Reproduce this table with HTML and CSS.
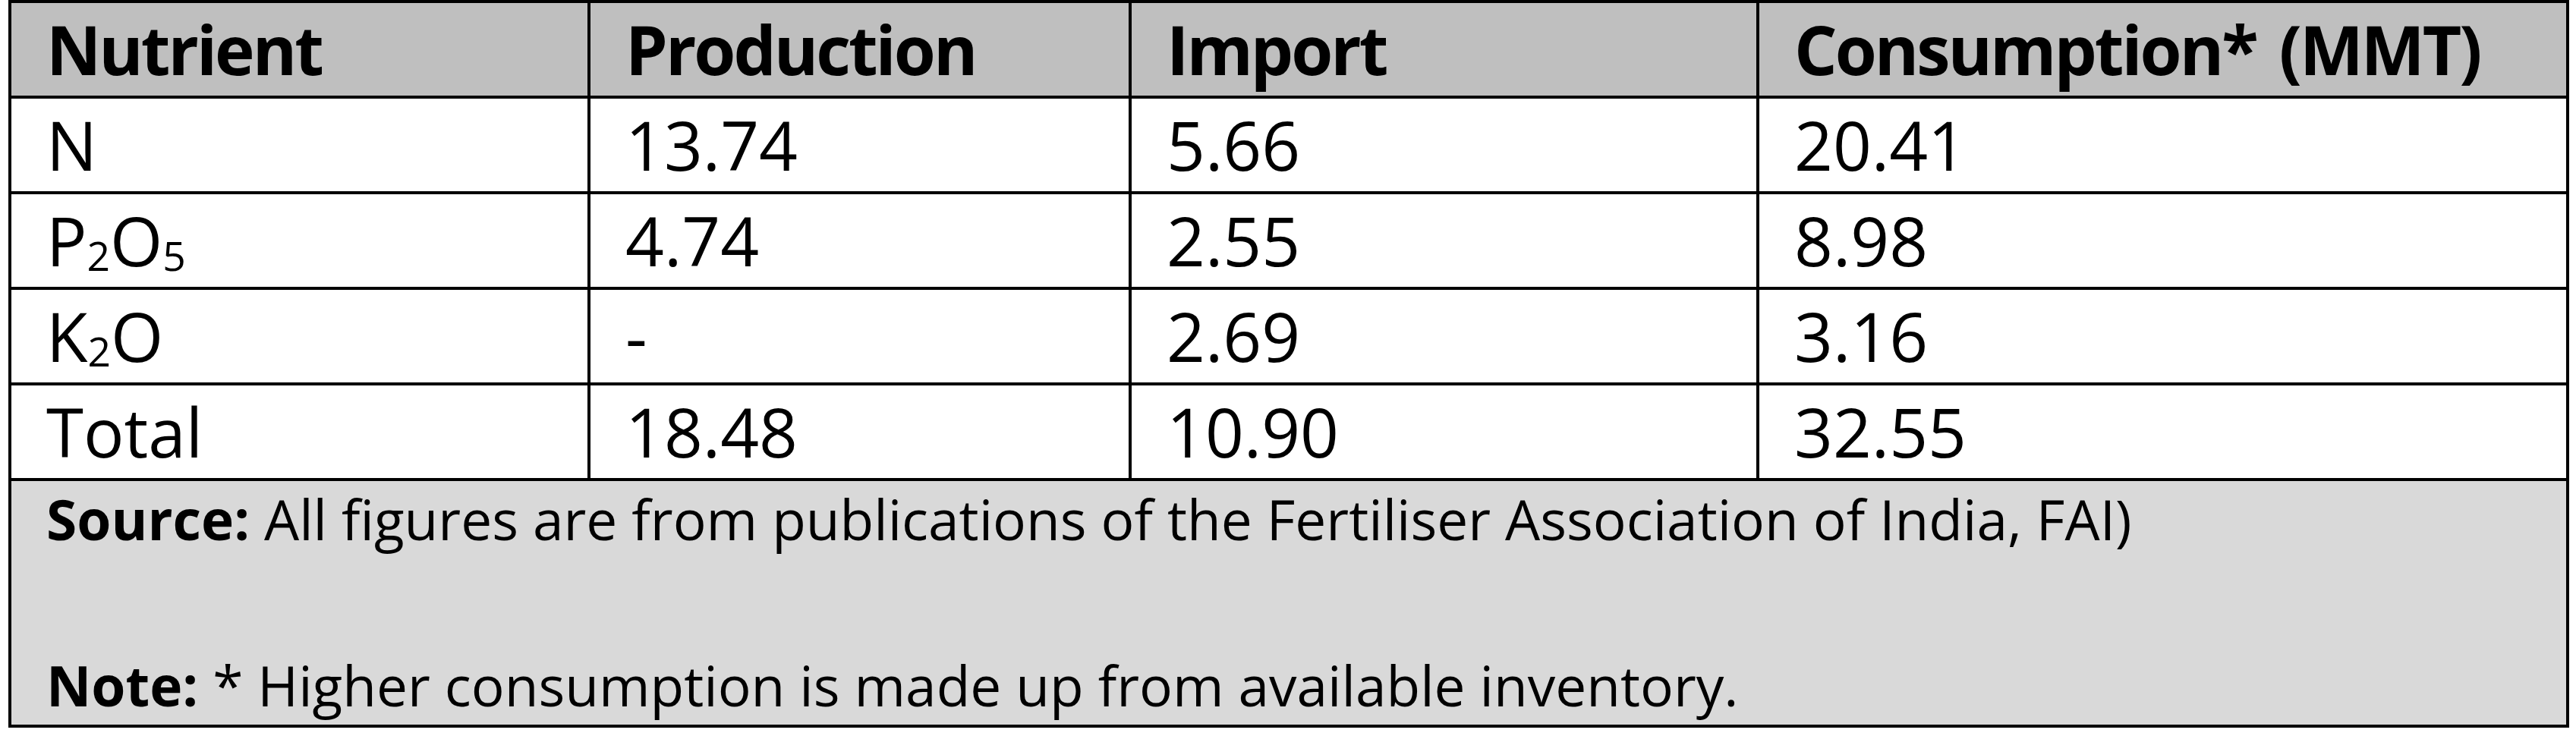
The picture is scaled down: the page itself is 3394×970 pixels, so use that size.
FILE: index.html
```html
<!DOCTYPE html>
<html lang="en">
<head>
<meta charset="utf-8">
<title>Fertiliser nutrients</title>
<link rel="stylesheet" href="styles.css">
</head>
<body>
<table class="data">
  <colgroup>
    <col class="c1"><col class="c2"><col class="c3"><col class="c4">
  </colgroup>
  <thead>
    <tr class="head">
      <th>Nutrient</th>
      <th>Production</th>
      <th>Import</th>
      <th>Consumption* (MMT)</th>
    </tr>
  </thead>
  <tbody>
    <tr><td>N</td><td>13.74</td><td>5.66</td><td>20.41</td></tr>
    <tr><td>P<sub>2</sub>O<sub>5</sub></td><td>4.74</td><td>2.55</td><td>8.98</td></tr>
    <tr><td>K<sub>2</sub>O</td><td>-</td><td>2.69</td><td>3.16</td></tr>
    <tr><td>Total</td><td>18.48</td><td>10.90</td><td>32.55</td></tr>
  </tbody>
  <tfoot>
    <tr>
      <td class="foot" colspan="4">
        <p class="line source"><b>Source:</b> All figures are from publications of the Fertiliser Association of India, FAI)</p>
        <p class="line note"><b>Note:</b> * Higher consumption is made up from available inventory.</p>
      </td>
    </tr>
  </tfoot>
</table>
</body>
</html>
```
FILE: styles.css
```css
html, body {
  margin: 0;
  padding: 0;
  background: #ffffff;
}

body {
  font-family: "Open Sans", Lato, sans-serif;
  font-variant-ligatures: none;
  color: #000000;
}

.data {
  margin-left: 11px;
  width: 3370px;
  table-layout: fixed;
  border-collapse: separate;
  border-spacing: 0;
  border-top: 4px solid #000;
  border-left: 4px solid #000;
}

.c1 { width: 763px; }
.c2 { width: 713px; }
.c3 { width: 827px; }
.c4 { width: 1067px; }

.data th,
.data td {
  box-sizing: border-box;
  border-right: 4px solid #000;
  border-bottom: 4px solid #000;
  padding: 0 0 0 46px;
  height: 126px;
  line-height: 122px;
  font-size: 89px;
  text-align: left;
  vertical-align: middle;
  white-space: nowrap;
}

.data th {
  font-weight: 700;
  letter-spacing: -3px;
  word-spacing: 10px;
  background: #bfbfbf;
}

.data td {
  font-weight: 400;
  background: #ffffff;
}

.data sub {
  font-size: 0.6em;
  line-height: 0;
  vertical-align: -0.12em;
}

.data td.foot {
  background: #d9d9d9;
  height: 325px;
  vertical-align: top;
  padding: 0 0 0 46px;
  line-height: 100px;
  font-size: 73px;
}

.line {
  margin: 0;
}

.line.note {
  margin-top: 119px;
}
```
